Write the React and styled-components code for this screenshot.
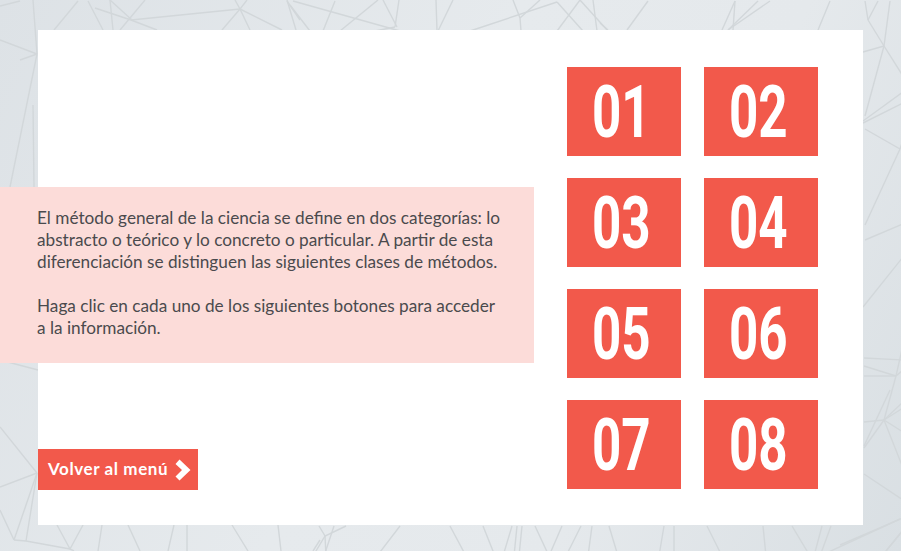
import React from 'react';
import styled, { createGlobalStyle } from 'styled-components';

const GlobalStyle = createGlobalStyle`
  html, body {
    margin: 0;
    padding: 0;
    background: #fff;
  }
`;

const lines = [
  // top left
  '0,6 20,1', '33,0 37,54', '0,40 37,54', '37,54 20,60', '78,1 54,30', '88,1 103,30',
  '95,8 131,20 157,30', '131,20 240,9', '110,0 132,20', '145,0 120,30', '110,0 113,30',
  '240,9 222,30', '247,0 240,9 250,30', '240,9 282,30', '235,0 240,9', '287,0 296,30', '287,1 300,20',
  // top middle
  '290,5 310,31', '335,1 323,31', '293,1 400,31', '378,0 340,31', '383,0 397,27', '399,0 395,27',
  '395,27 375,31', '436,0 437,31', '453,0 438,31', '513,0 520,18 521,31', '540,0 520,18',
  '557,2 470,31', '557,2 583,31', '580,0 557,31', '580,0 608,31', '593,0 597,31',
  // top right
  '600,23 608,30', '648,1 627,30', '735,1 722,30', '735,1 733,30', '758,1 728,30', '770,1 728,30',
  '830,1 818,30', '865,1 868,20', '878,1 868,20', '868,20 884,46', '890,1 884,46', '884,46 863,52',
  '884,46 865,116', '884,46 903,76',
  // right
  '863,121 903,92', '863,123 903,103', '865,129 900,149', '900,149 865,225', '900,149 903,140',
  '865,240 903,224', '863,307 903,257', '864,358 903,360', '864,366 896,376', '864,376 896,376',
  '896,376 903,345', '896,376 903,370', '896,376 884,420', '884,420 864,422', '884,420 903,402',
  '884,420 903,408', '884,420 903,432', '884,420 903,468', '884,420 864,448', '890,390 864,446',
  '864,474 903,500', '840,545 903,518', '886,551 903,530',
  // left
  '37,54 10,187', '33,105 34,187', '0,360 38,370', '0,427 37,473', '0,487 37,473', '37,473 14,540',
  '37,473 26,541', '0,510 14,540', '14,540 26,541 70,549 74,551',
  // bottom
  '57,525 70,549', '83,525 70,549', '102,525 98,551', '128,525 140,551', '174,525 168,551',
  '187,525 187,551', '232,525 248,551', '278,525 281,551', '320,540 313,551',
  '319,526 325,536 326,556', '346,526 325,536 313,556', '334,526 325,553', '400,526 377,556',
  '450,526 466,556', '483,526 495,556', '512,526 503,556', '517,526 514,556', '522,526 519,556',
  '535,526 549,556', '562,526 549,556', '581,526 566,556', '592,526 588,556', '609,526 618,556',
  '664,526 659,556', '674,526 674,556', '707,526 722,556', '763,526 766,556', '792,526 810,556',
  '822,526 814,556', '831,526 820,556', '820,556 900,519', '900,534 882,556',
];

const Page = styled.div`
  position: relative;
  box-sizing: border-box;
  width: 901px;
  height: 551px;
  padding: 30px 38px 26px;
  overflow: hidden;
  background: linear-gradient(115deg, #dde2e6 0%, #e6eaed 45%, #e5e9ec 70%, #d9dfe3 100%);
`;

const Mesh = styled.svg`
  position: absolute;
  left: 0;
  top: 0;
`;

const Card = styled.main`
  position: relative;
  box-sizing: border-box;
  display: flex;
  width: 825px;
  height: 495px;
  padding: 37px 0 35px;
  background: #fff;
`;

const LeftColumn = styled.div`
  display: flex;
  flex-direction: column;
  align-items: flex-start;
  width: 496px;
  padding-top: 120px;
`;

const Intro = styled.section`
  box-sizing: border-box;
  width: 534px;
  height: 176px;
  margin-left: -38px;
  padding: 20px 0 0 37px;
  background: #fcdcd9;
  color: #4a4a4d;
  font-family: Lato, "Liberation Sans", sans-serif;
  font-size: 17.2px;
  line-height: 22px;
`;

const Paragraph = styled.p`
  margin: 0 0 22px;
  white-space: nowrap;
`;

const BackButton = styled.button`
  display: flex;
  align-items: center;
  box-sizing: border-box;
  width: 160px;
  height: 41px;
  margin-top: auto;
  padding: 0 0 2px 10px;
  border: 0;
  background: #f2594b;
  color: #fff;
  font-family: Lato, "Liberation Sans", sans-serif;
  font-size: 17px;
  font-weight: 700;
  letter-spacing: 0.6px;
`;

const Chevron = styled.svg`
  margin-left: 7px;
  margin-top: 2px;
`;

const NumberGrid = styled.div`
  display: grid;
  grid-template-columns: 114px 114px;
  grid-auto-rows: 89px;
  gap: 22px 23px;
  margin-left: 33px;
`;

const NumberButton = styled.button`
  display: flex;
  align-items: center;
  justify-content: center;
  padding: 3px 6px 0 0;
  border: 0;
  background: #f2594b;
  color: #fff;
  font-family: Roboto, "Liberation Sans", sans-serif;
  font-size: 72px;
  font-weight: 700;
  line-height: 1;
`;

const Digits = styled.span`
  display: block;
  transform: scaleX(0.71);
`;

const numbers = ['01', '02', '03', '04', '05', '06', '07', '08'];

export default function App() {
  return (
    <Page>
      <GlobalStyle />
      <Mesh width="901" height="551" viewBox="0 0 901 551" fill="none" stroke="#d2d7da" strokeWidth="1.4">
        {lines.map((points) => (
          <polyline key={points} points={points} />
        ))}
      </Mesh>
      <Card>
        <LeftColumn>
          <Intro>
            <Paragraph>
              El método general de la ciencia se define en dos categorías: lo<br />
              abstracto o teórico y lo concreto o particular. A partir de esta<br />
              diferenciación se distinguen las siguientes clases de métodos.
            </Paragraph>
            <Paragraph>
              Haga clic en cada uno de los siguientes botones para acceder<br />
              a la información.
            </Paragraph>
          </Intro>
          <BackButton>
            Volver al menú
            <Chevron width="16" height="22" viewBox="0 0 16 22">
              <polygon points="0.5,5 4.5,0.5 15.5,11 4.5,21.5 0.5,17.5 7,11" fill="#fff" />
            </Chevron>
          </BackButton>
        </LeftColumn>
        <NumberGrid>
          {numbers.map((n) => (
            <NumberButton key={n}>
              <Digits>{n}</Digits>
            </NumberButton>
          ))}
        </NumberGrid>
      </Card>
    </Page>
  );
}
